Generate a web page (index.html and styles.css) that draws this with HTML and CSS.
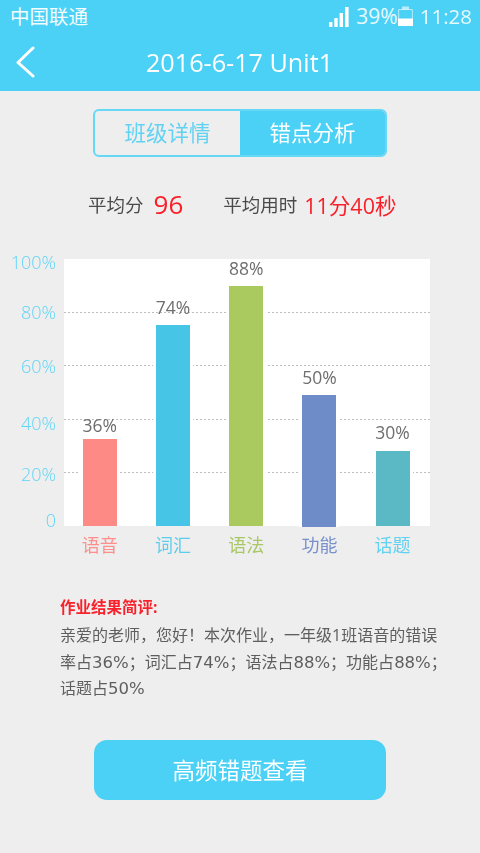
FILE: index.html
```html
<!DOCTYPE html>
<html lang="zh-CN">
<head>
<meta charset="utf-8">
<title>2016-6-17 Unit1</title>
<link rel="stylesheet" href="styles.css">
</head>
<body>
<div class="page">
  <header class="header">
    <div class="status">
      <span class="carrier">中国联通</span>
      <div class="status-right">
        <svg class="signal" width="20" height="20" viewBox="0 0 20 20"><path fill="#fff" d="M0 15h3.400v5H0zM5.300 11h3.400v9H5.300zM10.600 6h3.400v14h-3.400zM16 0h3.600v20H16z"/></svg>
        <span class="batt-text">39%</span>
        <svg class="battery" width="15" height="20" viewBox="0 0 15 20"><path fill="none" stroke="#fff" stroke-opacity=".6" d="M.7 3.500h13.600v16H.7z"/><path fill="#fff" fill-opacity=".6" d="M4 .5h7v3H4z"/><path fill="#fff" d="M0 12.500h15V20H0z"/></svg>
        <span class="time">11:28</span>
      </div>
    </div>
    <div class="nav">
      <svg class="back" width="20" height="32" viewBox="0 0 20 32"><path fill="none" stroke="#fff" stroke-width="3" stroke-linecap="round" stroke-linejoin="round" d="M18 2 3 16.500 18 30"/></svg>
      <h1 class="title">2016-6-17 Unit1</h1>
    </div>
  </header>

  <div class="tabs">
    <span class="tab">班级详情</span>
    <span class="tab tab-active">错点分析</span>
  </div>

  <div class="stats">
    <span class="stat-label">平均分</span>
    <span class="stat-score">96</span>
    <span class="stat-label stat-second">平均用时</span>
    <span class="stat-time">11分40秒</span>
  </div>

  <section class="chart">
    <div class="axis">
      <span class="tick t100">100%</span>
      <span class="tick t80">80%</span>
      <span class="tick t60">60%</span>
      <span class="tick t40">40%</span>
      <span class="tick t20">20%</span>
      <span class="tick t0">0</span>
    </div>
    <div class="chart-main">
      <div class="plot">
        <div class="gridlines">
          <i class="gl g80"></i><i class="gl g60"></i><i class="gl g40"></i><i class="gl g20"></i>
        </div>
        <div class="col c1"><span class="val">36%</span><div class="bar" style="height:87px"></div></div>
        <div class="col c2"><span class="val">74%</span><div class="bar" style="height:201px"></div></div>
        <div class="col c3"><span class="val">88%</span><div class="bar" style="height:240px"></div></div>
        <div class="col c4"><span class="val">50%</span><div class="bar bar-over" style="height:132px"></div></div>
        <div class="col c5"><span class="val">30%</span><div class="bar" style="height:75px"></div></div>
      </div>
      <div class="cats">
        <span class="cat n1">语音</span>
        <span class="cat n2">词汇</span>
        <span class="cat n3">语法</span>
        <span class="cat n4">功能</span>
        <span class="cat n5">话题</span>
      </div>
    </div>
  </section>

  <section class="comment">
    <h2 class="comment-title">作业结果简评:</h2>
    <p class="comment-text">
      <span class="line">亲爱的老师，您好！本次作业，一年级1班语音的错误</span>
      <span class="line">率占<span class="num">36%</span>；词汇占<span class="num">74%</span>；语法占<span class="num">88%</span>；功能占<span class="num">88%</span>；</span>
      <span class="line">话题占<span class="num">50%</span></span>
    </p>
  </section>

  <button class="cta">高频错题查看</button>
</div>
</body>
</html>
```

FILE: styles.css
```css
* { box-sizing: border-box; margin: 0; padding: 0; }
html, body { width: 480px; height: 853px; overflow: hidden; }
body { background: #eeeeee; font-family: "Open Sans", "Noto Sans CJK SC", sans-serif; }
.page { display: flex; flex-direction: column; height: 853px; filter: blur(0.35px); }

.header { background: #4bd1f5; height: 91px; color: #fff; flex: none; }
.status { height: 36px; display: flex; align-items: center; justify-content: space-between; padding: 0 8px 0 10px; }
.carrier { font-size: 19.500px; line-height: 34px; margin-top: -2px; color: #f4fcff; }
.status-right { display: flex; align-items: center; }
.signal { margin-right: 7px; margin-top: -3px; }
.batt-text { font-size: 21px; line-height: 28px; margin-top: -4px; color: #e8f9fe; }
.battery { margin-top: -5px; }
.time { font-size: 20.500px; line-height: 28px; margin: -4px 0 0 7px; color: #e8f9fe; }

.nav { height: 55px; position: relative; display: flex; align-items: center; justify-content: center; }
.back { position: absolute; left: 15px; top: 10px; }
.title { font-size: 25.200px; font-weight: 400; margin: -3px 0 0 -1px; }

.tabs { align-self: center; width: 294px; height: 48px; margin-top: 18px; display: flex; border: 2px solid #66d7f5; border-radius: 6px; overflow: hidden; flex: none; }
.tab { flex: 1; display: flex; align-items: center; justify-content: center; font-size: 21.500px; color: #62d2f2; line-height: 1; }
.tab-active { background: #4bd1f5; color: #fff; }

.stats { display: flex; align-items: center; height: 40px; margin-top: 27px; padding-left: 88px; flex: none; }
.stat-label { font-size: 18.500px; color: #4a4a4a; }
.stat-score { font-size: 26px; color: #fa1e28; margin-left: 10px; }
.stat-second { margin-left: 40px; }
.stat-time { font-size: 21.500px; color: #fa1e28; margin-left: 7px; }

.chart { display: flex; margin-top: 35px; flex: none; }
.axis { width: 64px; height: 270px; display: flex; flex-direction: column; align-items: flex-end; padding-right: 8px; }
.tick { font-size: 18px; line-height: 20px; color: #5fd5f6; font-weight: 300; }
.t100 { margin-top: -7px; }
.t80 { margin-top: 30px; }
.t60 { margin-top: 34px; }
.t40 { margin-top: 37px; }
.t20 { margin-top: 31px; }
.t0 { margin-top: 26px; }

.chart-main { width: 366px; }
.plot { position: relative; height: 267px; background: #fff; display: grid; grid-template-columns: repeat(5, 73.200px); grid-template-rows: 267px; align-items: end; }
.gridlines { display: flex; flex-direction: column; position: absolute; inset: 0; }
.gl { display: block; height: 1px; background: repeating-linear-gradient(90deg, #bdbdbd 0 2px, transparent 2px 4px); }
.g80 { margin-top: 53px; }
.g60 { margin-top: 52px; }
.g40 { margin-top: 53px; }
.g20 { margin-top: 52px; }
.col { position: relative; display: flex; flex-direction: column; align-items: center; height: 100%; justify-content: flex-end; padding-right: 1.500px; }
.val { font-size: 17.500px; line-height: 18px; color: #6e6e6e; margin-bottom: 9px; padding: 0 2px; }
.c1 .val { margin-bottom: 5px; }
.c5 .val { margin-bottom: 10px; }
.bar { width: 34px; box-shadow: 3px 0 0 #fff, -3px 0 0 #fff; }
.bar-over { margin-bottom: -1px; }
.c1 .bar { background: #fe8a86; }
.c2 .bar { background: #46c5e6; }
.c3 .bar { background: #aac95f; }
.c4 .bar { background: #6e8cc8; }
.c5 .bar { background: #5bb8c5; }

.cats { display: grid; grid-template-columns: repeat(5, 73.200px); height: 36px; align-items: center; }
.cat { font-size: 18px; text-align: center; padding-right: 1.500px; }
.n1 { color: #fe8f8c; }
.n2 { color: #5fcdec; }
.n3 { color: #a9c766; }
.n4 { color: #7890cb; }
.n5 { color: #62d2f2; }

.comment { margin-top: 33px; padding: 0 30px 0 60px; flex: none; }
.comment-title { font-size: 15.500px; font-weight: 700; color: #f7222c; line-height: 24px; }
.comment-text { font-size: 16px; line-height: 26.500px; color: #5e5e5e; margin-top: 3px; }
.line { display: block; white-space: nowrap; }
.num { font-family: "DejaVu Sans", sans-serif; font-size: 16.500px; line-height: 1; }

.cta { align-self: center; width: 292px; height: 60px; margin-top: 38px; background: #4bd1f5; border: none; border-radius: 13px; color: #fff; font-size: 22.500px; font-family: inherit; flex: none; }
```
